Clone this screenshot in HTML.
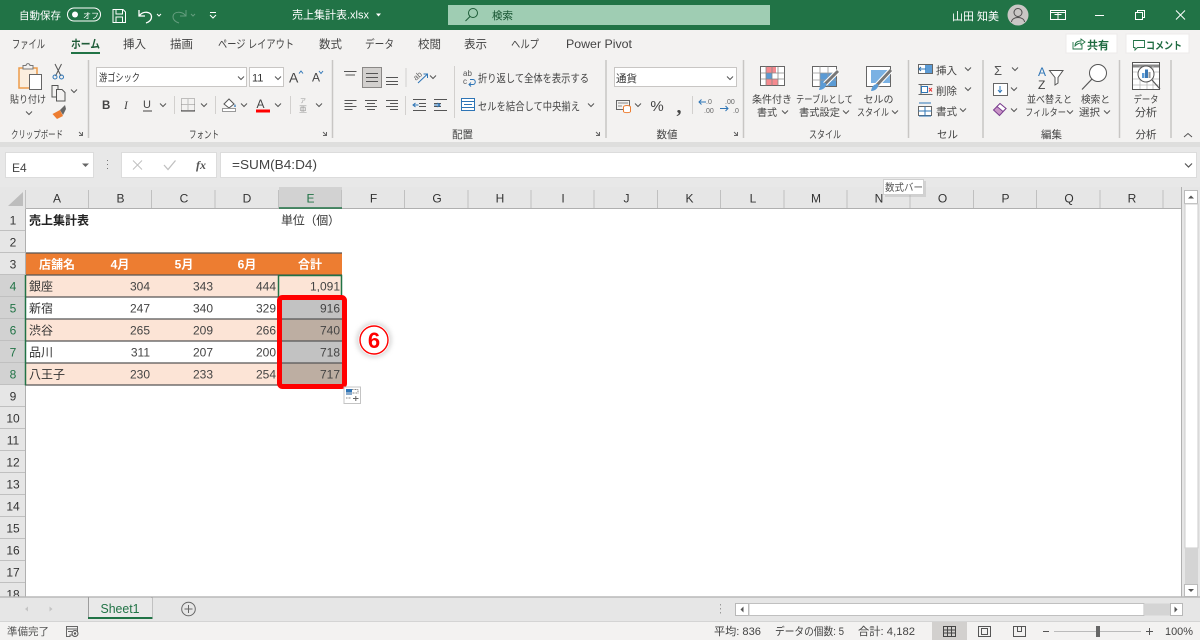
<!DOCTYPE html>
<html lang="ja">
<head>
<meta charset="utf-8">
<title>売上集計表.xlsx - Excel</title>
<style>
html,body{margin:0;padding:0;width:1200px;height:640px;overflow:hidden;background:#fff}
svg{display:block}
text{font-family:"Liberation Sans","Noto Sans CJK JP",sans-serif;fill:#444;font-size:10px}
.w text{fill:#fff}
.tab{font-size:11.5px;fill:#444}
.hd{font-size:12px;fill:#333;text-anchor:middle}
.rh{font-size:12px;fill:#333;text-anchor:middle}
.rs{font-size:12px;fill:#217346;text-anchor:middle}
.c{font-size:12px;fill:#333}
.r{font-size:12px;fill:#444;text-anchor:end}
.b{font-size:12px;fill:#fff;font-weight:bold;text-anchor:middle}
.m{text-anchor:middle}
.s{fill:none;stroke:#555;stroke-width:1}
.sep{stroke:#c8c6c4;stroke-width:1.5}
</style>
</head>
<body>
<svg width="1200" height="640" viewBox="0 0 1200 640" xmlns="http://www.w3.org/2000/svg">
<defs>
<path id="cv" d="M-3 -1.5L0 1.5L3 -1.5" fill="none" stroke="#555" stroke-width="1"/>
<path id="ln" d="M0 3.5H3.5V0M0 0L3 3" fill="none" stroke="#666" stroke-width="1"/>
<filter id="gl" x="-40%" y="-40%" width="180%" height="180%"><feGaussianBlur stdDeviation="2"/></filter>
</defs>

<!-- title bar -->
<rect width="1200" height="30" fill="#217346"/>
<g class="w">
<text x="19" y="19" style="font-size:10.5px">自動保存</text>
<rect x="67.5" y="8" width="33" height="13" rx="6.5" fill="none" stroke="#fff"/>
<circle cx="75" cy="14.5" r="3" fill="#fff"/>
<text x="83" y="18.5" style="font-size:8px">オフ</text>
<text x="292" y="18.5" style="font-size:11px">売上集計表.xlsx</text>
<text x="952" y="20" style="font-size:11px">山田 知美</text>
</g>
<g fill="none" stroke="#fff" stroke-width="1">
<path d="M113 9.5H123L125.5 12V22.5H113ZM116 9.5V14H122.5V9.5M116 22.5V17H122.5V22.5"/>
<path d="M139 10V16H145M139.5 15.5C143 11 151.5 11 151.5 17C151.5 20 149 22 146 23" stroke-width="1.3"/>
<path d="M157 14L159 16L161 14" stroke-width="1"/>
<g opacity=".3"><path d="M186 10V16H180M185.5 15.5C182 11 173 11 173 17C173 20 176 22 179 23"/><path d="M191 14L193 16L195 14"/></g>
<path d="M210 12.5H216M210 15L213 18L216 15"/>
<path d="M1054 10.5H1069V19.5H1054ZM1054 12.5H1069M1058 14.5H1065M1061.5 12.5V19.5" transform="translate(-3.5,0)"/>
<path d="M1095 15.5H1104"/>
<path d="M1135.5 12.5H1142.5V19.5H1135.5ZM1137.5 12.5V10.5H1144.5V17.5H1142.5"/>
<path d="M1176 10.5L1185 19.5M1185 10.5L1176 19.5"/>
<path d="M376 13.5h5l-2.500 3z" fill="#fff" stroke="none"/>
</g>
<rect x="448" y="5" width="322" height="20" fill="#9fcdb3"/>
<circle cx="473" cy="13" r="4.5" fill="none" stroke="#1d5c38" stroke-width="1"/>
<path d="M470 16.5L465.5 21" stroke="#1d5c38" stroke-width="1"/>
<text x="492" y="19" style="font-size:10.5px;fill:#14522f">検索</text>
<circle cx="1018" cy="15" r="10.5" fill="#c9c7c5"/>
<circle cx="1018" cy="12.5" r="4" fill="none" stroke="#4d4d4d"/>
<path d="M1011.5 22C1012 16 1024 16 1024.5 22" fill="none" stroke="#4d4d4d"/>

<!-- ribbon background -->
<rect y="30" width="1200" height="112" fill="#f3f2f1"/>
<rect y="142" width="1200" height="5" fill="#dededd"/>
<rect y="147" width="1200" height="40" fill="#e8e8e8"/>

<!-- tabs -->
<text class="tab" x="12" y="48" textLength="33" lengthAdjust="spacingAndGlyphs">ファイル</text>
<text class="tab" x="71" y="48" textLength="29" lengthAdjust="spacingAndGlyphs" style="font-weight:bold;fill:#1f5c39">ホーム</text>
<rect x="71" y="52" width="29" height="2" fill="#217346"/>
<text class="tab" x="123" y="48">挿入</text>
<text class="tab" x="170" y="48">描画</text>
<text class="tab" x="218" y="48" textLength="76" lengthAdjust="spacingAndGlyphs">ページ レイアウト</text>
<text class="tab" x="319" y="48">数式</text>
<text class="tab" x="365" y="48" textLength="29" lengthAdjust="spacingAndGlyphs">データ</text>
<text class="tab" x="418" y="48">校閲</text>
<text class="tab" x="464" y="48">表示</text>
<text class="tab" x="511" y="48" textLength="28" lengthAdjust="spacingAndGlyphs">ヘルプ</text>
<text class="tab" x="566" y="48" textLength="66" lengthAdjust="spacingAndGlyphs" style="font-size:12px">Power Pivot</text>
<rect x="1066" y="34" width="51" height="19" fill="#fff" stroke="#ecebea"/>
<path d="M1073 42V49H1082V45M1075 46C1075 42 1078 41 1081 41V39L1085 42L1081 45V43C1079 43 1077 44 1075 46Z" fill="none" stroke="#217346" stroke-width=".9"/>
<text x="1087" y="49" style="font-size:11px;font-weight:bold;fill:#1f6b41">共有</text>
<rect x="1126" y="34" width="63" height="19" fill="#fff" stroke="#ecebea"/>
<path d="M1133.5 40.5H1144.5V47.5H1137.5L1135 50V47.5H1133.5Z" fill="none" stroke="#217346" stroke-width=".9"/>
<text x="1146" y="49" textLength="36" lengthAdjust="spacingAndGlyphs" style="font-size:10.5px;font-weight:bold;fill:#1f6b41">コメント</text>

<!-- separators -->
<g class="sep">
<path d="M88.5 60V138M332.5 60V138M606 60V138M743.5 60V138M908.5 60V138M983 60V138M1119.5 60V138M1171 60V138"/>
</g>
<g stroke="#d2d0ce">
<path d="M174.5 96V114M215.5 96V114M290.5 96V114M406 68V87M405.5 96V115M454.5 66V118M692.5 96V114"/>
</g>

<!-- clipboard -->
<path d="M19 68H37V88H19Z" fill="#fbeede" stroke="#ed9b4a" stroke-width="1.5"/>
<path d="M23 68V65.5H26C26.5 63 29.5 63 30 65.5H33V69H23Z" fill="#f3f2f1" stroke="#777"/>
<rect x="29.5" y="74.5" width="12" height="15" fill="#fff" stroke="#666"/>
<path d="M55 64L61 76M61.5 64L55.5 76" fill="none" stroke="#555"/>
<circle cx="55" cy="77" r="2" fill="none" stroke="#2e75b6"/><circle cx="61.5" cy="77" r="2" fill="none" stroke="#2e75b6"/>
<path d="M52 85.5H58V97H52Z" fill="#f3f2f1" stroke="#555"/>
<path d="M56.5 89.5H62L65 92.5V101H56.5Z" fill="#f3f2f1" stroke="#555"/>
<use href="#cv" x="74" y="91"/>
<path d="M52.5 114L60 110L63 116L57 119Z" fill="#ed7d31"/>
<path d="M60 110L65 105L66 109L63 115" fill="#666"/>
<text x="10" y="103" textLength="36" lengthAdjust="spacingAndGlyphs">貼り付け</text>
<use href="#cv" x="29" y="113"/>
<text x="11" y="138" textLength="52" lengthAdjust="spacingAndGlyphs" style="font-size:10.5px">クリップボード</text>
<use href="#ln" x="79" y="132"/>

<!-- font -->
<rect x="96.5" y="67.5" width="150" height="19" fill="#fff" stroke="#c8c6c4"/>
<text x="99" y="81" textLength="41" lengthAdjust="spacingAndGlyphs" style="font-size:10.5px;fill:#333">游ゴシック</text>
<use href="#cv" x="241" y="78"/>
<rect x="249.5" y="67.5" width="34" height="19" fill="#fff" stroke="#c8c6c4"/>
<text x="252" y="81.5" style="font-size:11px;fill:#333">11</text>
<use href="#cv" x="278" y="78"/>
<text x="289" y="82.5" style="font-size:14px;fill:#444">A</text>
<path d="M299 73.5L301 71L303 73.5" fill="none" stroke="#2e75b6"/>
<text x="312" y="81.5" style="font-size:12px;fill:#444">A</text>
<path d="M319 71L321 73.5L323 71" fill="none" stroke="#2e75b6"/>
<text x="102" y="109" style="font-size:11.5px;font-weight:bold;fill:#444">B</text>
<text x="124" y="109" style="font-size:11.5px;font-style:italic;font-family:'Liberation Serif',serif;fill:#444">I</text>
<text x="143" y="108" style="font-size:11px;fill:#444">U</text>
<path d="M143 111H152" stroke="#444"/>
<use href="#cv" x="163" y="105"/>
<path d="M181.5 98.5H194.5V110.5H181.5ZM188 98.5V110.5M181.5 104.5H194.5" fill="none" stroke="#888" stroke-dasharray="1 1"/>
<path d="M181 111H195" stroke="#444"/>
<use href="#cv" x="204" y="105"/>
<path d="M224 104L229 99L234 104L229 108Z" fill="#fff" stroke="#555"/>
<path d="M235 104C236 106 236 107 235 107C234 107 234 106 235 104Z" fill="#2e75b6"/>
<rect x="222.5" y="108.5" width="13" height="3" fill="#fff" stroke="#999"/>
<use href="#cv" x="244" y="105"/>
<text x="256.5" y="108" style="font-size:12px;fill:#444">A</text>
<rect x="256" y="109.5" width="14" height="3" fill="#f00"/>
<use href="#cv" x="278" y="105"/>
<text class="m" x="303" y="103" style="font-size:6px;fill:#999">ア</text>
<text class="m" x="303" y="112" style="font-size:8px;fill:#999">亜</text>
<use href="#cv" x="319" y="105"/>
<text x="189" y="138" textLength="30" lengthAdjust="spacingAndGlyphs" style="font-size:10.5px">フォント</text>
<use href="#ln" x="323" y="132"/>

<!-- alignment -->
<g class="s">
<path d="M344 71.5H356.500M345.500 75H355" transform="translate(0,0)"/>
<rect x="362.5" y="67.500" width="19" height="20" fill="#d2d0ce" stroke="#8a8886"/>
<path d="M366 73.5H378M366 77.5H378M366 81.5H378"/>
<path d="M386 77.5H398M386 81.5H398M386 84.5H398"/>
<path d="M344.5 100.5H356.5M344.5 103.5H352.5M344.5 106.500H356.5M344.5 109.5H352.5"/>
<path d="M365 100.5H377M367 103.5H375M365 106.5H377M367 109.5H375"/>
<path d="M386 100.5H398M390 103.5H398M386 106.5H398M390 109.5H398"/>
<path d="M413 99.5H426M419 103.5H426M419 106.5H426M413 110.5H426"/>
<path d="M434 99.5H447M434 103.5H441M434 106.5H441M434 110.5H447" transform="translate(0,0)"/>
</g>
<path d="M413 105H418.500M415.500 103L413 105L415.500 107M434 105H440M437.500 103L440 105L437.500 107" fill="none" stroke="#2e75b6"/>
<text x="413" y="79" transform="rotate(-40 417 76)" style="font-size:8px;fill:#666">ab</text>
<path d="M418 83L427 74.500M423.500 74H427.500V78" fill="none" stroke="#2e75b6"/>
<use href="#cv" x="433" y="77"/>
<text x="463" y="76" style="font-size:8px;fill:#555">ab</text>
<text x="463" y="84" style="font-size:8px;fill:#555">c</text>
<path d="M470 79.5H473C476 79.5 476 84.5 473 84.5H469M471 82.5L469 84.5L471 86.5" fill="none" stroke="#2e75b6"/>
<text x="478" y="82" textLength="111" lengthAdjust="spacingAndGlyphs" style="font-size:11px">折り返して全体を表示する</text>
<rect x="461.5" y="98.5" width="13" height="12" fill="#fff" stroke="#2e75b6"/>
<path d="M461.5 101.5H474.5M461.5 107.5H474.5M464 104.5H472" fill="none" stroke="#2e75b6"/>
<text x="478" y="110" textLength="102" lengthAdjust="spacingAndGlyphs" style="font-size:11px">セルを結合して中央揃え</text>
<use href="#cv" x="591" y="105"/>
<text x="452" y="138" style="font-size:10.5px">配置</text>
<use href="#ln" x="596" y="132"/>

<!-- number -->
<rect x="614.5" y="67.5" width="122" height="19" fill="#fff" stroke="#c8c6c4"/>
<text x="616" y="82" style="font-size:10.5px;fill:#333">通貨</text>
<use href="#cv" x="730" y="78"/>
<rect x="616.5" y="100.5" width="13" height="9" fill="none" stroke="#666"/>
<path d="M618 103H628M618 106H622" stroke="#888"/>
<ellipse cx="627" cy="107" rx="3.5" ry="1.5" fill="#fff" stroke="#ed7d31"/>
<path d="M623.5 107V111.500C624 113 630 113 630.5 111.5V107" fill="#fff" stroke="#ed7d31"/>
<use href="#cv" x="638" y="105"/>
<text class="m" x="657" y="111" style="font-size:15px;fill:#444">%</text>
<text class="m" x="679" y="113" style="font-size:20px;font-weight:bold;fill:#444;font-family:'Liberation Serif',serif">,</text>
<text x="706" y="104" style="font-size:7px;fill:#666">.0</text>
<text x="704" y="113" style="font-size:7px;fill:#666">.00</text>
<path d="M699 102H706M701.5 99.5L699 102L701.5 104.5" fill="none" stroke="#2e75b6"/>
<text x="725" y="104" style="font-size:7px;fill:#666">.00</text>
<text x="733" y="113" style="font-size:7px;fill:#666">.0</text>
<path d="M720 108.5H728M725.5 106L728 108.5L725.5 111" fill="none" stroke="#2e75b6"/>
<text class="m" x="667" y="138" style="font-size:10.5px">数値</text>
<use href="#ln" x="734" y="132"/>

<!-- styles -->
<g>
<rect x="760.5" y="66.5" width="24" height="19" fill="#fff" stroke="#666"/>
<rect x="766" y="67" width="10" height="6" fill="#f58a8f"/>
<rect x="766" y="73" width="6" height="6" fill="#5b9bd5"/>
<rect x="766" y="79" width="12" height="6" fill="#f58a8f"/>
<path d="M760.5 73H784.5M760.5 79H784.5M766 66.5V85.5M772 66.5V85.5M778 66.5V85.5" stroke="#888" fill="none" stroke-width=".8"/>
<rect x="812.5" y="66.5" width="24" height="20" fill="#fff" stroke="#666"/>
<rect x="820" y="73" width="16" height="13" fill="#5b9bd5"/>
<path d="M812.5 73H836.5M812.5 80H836.5M820 66.5V86.5M828 66.5V86.5" stroke="#999" fill="none" stroke-width=".8"/>
<path d="M825 84L838 71" stroke="#fff" stroke-width="5"/>
<path d="M825 84L838 71" stroke="#777" stroke-width="3"/>
<path d="M819 90C820 85 822 83 826 83C827 87 823 90 819 90Z" fill="#5b9bd5"/>
<rect x="866.5" y="66.5" width="24" height="20" fill="#fff" stroke="#666"/>
<rect x="871" y="70" width="19" height="13" fill="#7ab1e3"/>
<path d="M877 85L891 70" stroke="#fff" stroke-width="5"/>
<path d="M877 85L891 70" stroke="#777" stroke-width="3"/>
<path d="M871 91C872 86 874 84 878 84C879 88 875 91 871 91Z" fill="#5b9bd5"/>
</g>
<text class="m" x="772" y="103">条件付き</text>
<text x="757" y="116">書式</text><use href="#cv" x="785" y="112"/>
<text class="m" x="824.5" y="103" textLength="57" lengthAdjust="spacingAndGlyphs">テーブルとして</text>
<text x="799" y="116" textLength="41" lengthAdjust="spacingAndGlyphs">書式設定</text><use href="#cv" x="846" y="112"/>
<text class="m" x="878.500" y="103">セルの</text>
<text x="857" y="116" textLength="32" lengthAdjust="spacingAndGlyphs">スタイル</text><use href="#cv" x="895" y="112"/>
<text x="809" y="138" textLength="32" lengthAdjust="spacingAndGlyphs" style="font-size:10.5px">スタイル</text>

<!-- cells -->
<rect x="918.5" y="64.5" width="14" height="9" fill="#fff" stroke="#666"/>
<rect x="925" y="65" width="7" height="8" fill="#5b9bd5"/>
<path d="M919 69H926M921 67L919 69L921 71" fill="none" stroke="#2e75b6"/>
<text x="936" y="74" style="font-size:10.5px">挿入</text><use href="#cv" x="968" y="69"/>
<path d="M918.5 84.5H932.5M918.5 94.5H932.5M921 84.5V94.5" fill="none" stroke="#666"/>
<rect x="921.5" y="86.5" width="6" height="6" fill="#fff" stroke="#2e75b6"/>
<path d="M929 88L932 91.5M932 88L929 91.5" stroke="#e33"/>
<text x="936" y="94.5" style="font-size:10.5px">削除</text><use href="#cv" x="968" y="89"/>
<rect x="918.5" y="106.5" width="13" height="9" fill="#fff" stroke="#666"/>
<path d="M919 103H931M919 116H931M925 106.5V115.5M918.5 111H931.5" stroke="#2e75b6" fill="none"/>
<text x="936" y="115" style="font-size:10.5px">書式</text><use href="#cv" x="963" y="110"/>
<text x="937" y="138" style="font-size:10.5px">セル</text>

<!-- editing -->
<text x="994" y="75" style="font-size:13px;fill:#555">Σ</text><use href="#cv" x="1015" y="69"/>
<rect x="993.5" y="83.5" width="14" height="12" fill="#fff" stroke="#666"/>
<path d="M1000 86V92M998 90L1000 92.5L1002 90" fill="none" stroke="#2e75b6"/><use href="#cv" x="1014" y="89"/>
<path d="M993.5 110L1000 103.5L1006 108.5L999.5 115.5Z" fill="#c994c7" stroke="#7b3f8f"/>
<path d="M1000 103.5L1006 108.5L1003 111.5L997 106.5Z" fill="#fff" stroke="#7b3f8f"/>
<use href="#cv" x="1014" y="110"/>
<text x="1038" y="76" style="font-size:12px;fill:#2e75b6">A</text>
<text x="1038" y="89" style="font-size:12px;fill:#444">Z</text>
<path d="M1049.5 70.5H1063L1058 77.5V83L1055 85V77.5Z" fill="#fff" stroke="#555"/>
<circle cx="1098" cy="73" r="8.5" fill="#fff" stroke="#555"/>
<path d="M1092 79L1082 89.5" stroke="#555" stroke-width="1.2"/>
<text x="1027" y="103" textLength="45" lengthAdjust="spacingAndGlyphs">並べ替えと</text>
<text x="1025" y="116" textLength="41" lengthAdjust="spacingAndGlyphs">フィルター</text><use href="#cv" x="1070" y="112"/>
<text x="1081" y="103" textLength="29" lengthAdjust="spacingAndGlyphs">検索と</text>
<text x="1079" y="116" textLength="21" lengthAdjust="spacingAndGlyphs">選択</text><use href="#cv" x="1107" y="112"/>
<text x="1041" y="138" style="font-size:10.5px">編集</text>

<!-- analysis -->
<rect x="1132.5" y="62.5" width="27" height="27" fill="#fff" stroke="#555"/>
<path d="M1133 66H1159" stroke="#888" stroke-width="3"/>
<path d="M1133 72H1159M1133 79H1159M1133 85H1159M1140 66V89M1147 66V89M1153 66V89" stroke="#bbb" stroke-width=".8"/>
<circle cx="1146" cy="74" r="8" fill="#fff" stroke="#555"/>
<rect x="1142" y="73" width="2.5" height="5" fill="#5b9bd5"/><rect x="1145" y="69.5" width="3" height="8.5" fill="#3a78b5"/><rect x="1148.5" y="72" width="2" height="6" fill="#999"/>
<path d="M1152 80L1160 89" stroke="#555" stroke-width="1.2"/>
<text class="m" x="1146" y="103" textLength="25" lengthAdjust="spacingAndGlyphs">データ</text>
<text class="m" x="1146" y="116" style="font-size:11px">分析</text>
<text class="m" x="1146" y="138" style="font-size:10.5px">分析</text>
<path d="M1184 137L1188 133.5L1192 137" fill="none" stroke="#555"/>

<!-- formula bar -->
<rect x="5.5" y="152.5" width="88" height="25" fill="#fff" stroke="#dcdcdc"/>
<text x="12" y="172" style="font-size:12px;fill:#444">E4</text>
<path d="M82 163.5h7l-3.500 3.500z" fill="#666"/>
<path d="M107.5 160v1M107.5 164v1M107.5 168v1" stroke="#777"/>
<rect x="121.5" y="152.5" width="95" height="25" fill="#fff" stroke="#dcdcdc"/>
<path d="M133 160.5L142 169.5M142 160.5L133 169.5" stroke="#c0c0c0" stroke-width="1"/>
<path d="M164 165L168 169.5L175.5 160.5" fill="none" stroke="#c0c0c0" stroke-width="1.3"/>
<text x="196" y="169" style="font-size:12px;font-style:italic;font-weight:bold;font-family:'Liberation Serif',serif;fill:#555">fx</text>
<rect x="220.5" y="152.5" width="976" height="25" fill="#fff" stroke="#dcdcdc"/>
<text x="232" y="169" textLength="85" lengthAdjust="spacingAndGlyphs" style="font-size:13px;fill:#444">=SUM(B4:D4)</text>
<path d="M1185 163.5L1188.5 167L1192 163.5" fill="none" stroke="#555" stroke-width="1.2"/>

<!-- grid -->
<rect x="26" y="209" width="1156" height="388" fill="#fff"/>
<rect y="187" width="26" height="410" fill="#e6e6e6"/>
<rect x="26" y="187" width="1138" height="22" fill="#e6e6e6"/>
<rect x="1164" y="187" width="36" height="22" fill="#e6e6e6"/>
<rect x="1182" y="187" width="18" height="410" fill="#e6e6e6"/>
<path d="M23 192V206H8Z" fill="#bdbdbd"/>
<rect x="279" y="187" width="63" height="21" fill="#d2d2d2"/>
<rect x="0" y="275" width="25" height="110" fill="#d2d2d2"/>
<g stroke="#c0c0c0" stroke-width="1">
<path d="M25.5 190V209M88.5 190V209M151.5 190V209M215 190V209M278.5 190V209M341.5 190V209M404.5 190V209M468 190V209M531 190V209M594 190V209M657.5 190V209M720.5 190V209M784 190V209M847 190V209M910 190V209M973.5 190V209M1036.5 190V209M1100 190V209M1163 190V209"/>
<path d="M0 230.5H25M0 252.5H25M0 274.5H25M0 296.5H25M0 318.5H25M0 340.5H25M0 362.5H25M0 384.5H25M0 406.5H25M0 428.5H25M0 450.5H25M0 472.5H25M0 494.5H25M0 516.5H25M0 538.5H25M0 560.5H25M0 582.5H25"/>
</g>
<path d="M26 208.5H1182M25.5 209V597M1181.5 187V597" stroke="#b0b0b0"/>
<path d="M279 208H342" stroke="#217346" stroke-width="1.5"/>
<text class="hd" x="57" y="202.5">A</text><text class="hd" x="120.5" y="202.5">B</text><text class="hd" x="184" y="202.5">C</text><text class="hd" x="247" y="202.5">D</text><text class="hd" x="310.5" y="202.5" style="fill:#217346">E</text><text class="hd" x="373.5" y="202.5">F</text><text class="hd" x="437" y="202.5">G</text><text class="hd" x="500" y="202.5">H</text><text class="hd" x="563" y="202.5">I</text><text class="hd" x="626.5" y="202.5">J</text><text class="hd" x="689.5" y="202.5">K</text><text class="hd" x="753" y="202.5">L</text><text class="hd" x="816" y="202.5">M</text><text class="hd" x="879" y="202.5">N</text><text class="hd" x="942.5" y="202.5">O</text><text class="hd" x="1005.5" y="202.5">P</text><text class="hd" x="1069" y="202.5">Q</text><text class="hd" x="1132" y="202.5">R</text>
<text class="rh" x="13" y="224.5">1</text><text class="rh" x="13" y="246.5">2</text><text class="rh" x="13" y="268.5">3</text><text class="rs" x="13" y="290.5">4</text><text class="rs" x="13" y="312.5">5</text><text class="rs" x="13" y="334.5">6</text><text class="rs" x="13" y="356.5">7</text><text class="rs" x="13" y="378.5">8</text><text class="rh" x="13" y="400.5">9</text><text class="rh" x="13" y="422.5">10</text><text class="rh" x="13" y="444.5">11</text><text class="rh" x="13" y="466.5">12</text><text class="rh" x="13" y="488.5">13</text><text class="rh" x="13" y="510.5">14</text><text class="rh" x="13" y="532.5">15</text><text class="rh" x="13" y="554.5">16</text><text class="rh" x="13" y="576.5">17</text><text class="rh" x="13" y="598.5">18</text>

<!-- sheet contents -->
<text x="29" y="224.5" style="font-size:12px;font-weight:bold;fill:#222">売上集計表</text>
<text x="281" y="224.5" textLength="59" style="font-size:12px;fill:#333">単位（個）</text>
<rect x="26" y="253" width="316" height="22" fill="#ed7d31"/>
<rect x="26" y="275" width="316" height="22" fill="#fce4d6"/>
<rect x="26" y="319" width="253" height="22" fill="#fce4d6"/>
<rect x="26" y="363" width="253" height="22" fill="#fce4d6"/>
<rect x="279" y="297" width="63" height="22" fill="#c2c2c2"/>
<rect x="279" y="319" width="63" height="22" fill="#bdaea2"/>
<rect x="279" y="341" width="63" height="22" fill="#c2c2c2"/>
<rect x="279" y="363" width="63" height="22" fill="#bdaea2"/>
<path d="M26 253H342M26 275H342M26 297H342M26 319H342M26 341H342M26 363H342M26 385H342" stroke="#555" stroke-width="1.3"/>
<text class="b" x="57" y="268.5">店舗名</text><text class="b" x="120" y="268.5">4月</text><text class="b" x="184" y="268.5">5月</text><text class="b" x="247" y="268.5">6月</text><text class="b" x="310" y="268.5">合計</text>
<text class="c" x="29" y="290.5">銀座</text><text class="r" x="150" y="290.5">304</text><text class="r" x="213" y="290.5">343</text><text class="r" x="276" y="290.5">444</text><text class="r" x="340" y="290.5">1,091</text>
<text class="c" x="29" y="312.5">新宿</text><text class="r" x="150" y="312.5">247</text><text class="r" x="213" y="312.5">340</text><text class="r" x="276" y="312.5">329</text><text class="r" x="340" y="312.5">916</text>
<text class="c" x="29" y="334.5">渋谷</text><text class="r" x="150" y="334.5">265</text><text class="r" x="213" y="334.5">209</text><text class="r" x="276" y="334.5">266</text><text class="r" x="340" y="334.5">740</text>
<text class="c" x="29" y="356.5">品川</text><text class="r" x="150" y="356.5">311</text><text class="r" x="213" y="356.5">207</text><text class="r" x="276" y="356.5">200</text><text class="r" x="340" y="356.5">718</text>
<text class="c" x="29" y="378.5">八王子</text><text class="r" x="150" y="378.5">230</text><text class="r" x="213" y="378.5">233</text><text class="r" x="276" y="378.5">254</text><text class="r" x="340" y="378.5">717</text>
<path d="M25.5 275V385.5" stroke="#217346" stroke-width="1.5"/>
<rect x="278.5" y="275.5" width="63" height="21.5" fill="none" stroke="#217346" stroke-width="1.5"/>
<rect x="279.5" y="297.5" width="65" height="89" rx="3" fill="none" stroke="#f00" stroke-width="5"/>

<!-- circled 6 -->
<circle cx="374" cy="340" r="18" fill="#cfcfcf" filter="url(#gl)" opacity=".7"/>
<circle cx="374" cy="340" r="15.5" fill="#fff"/>
<circle cx="374" cy="340" r="14" fill="#fff" stroke="#f00" stroke-width="1.4"/>
<text x="374" y="348" text-anchor="middle" style="font-size:22px;font-weight:bold;fill:#f00">6</text>

<!-- paste options -->
<rect x="344" y="387" width="16.5" height="16.5" fill="#fff" stroke="#c4c4c4"/>
<rect x="346" y="389" width="6" height="3" fill="#2e75b6"/><rect x="346" y="392" width="6" height="3" fill="#88aacc"/>
<path d="M352 389.5H358V393H352M346 398H351" stroke="#888" fill="none" stroke-dasharray="1 .5"/>
<path d="M353 398.5H358.5M355.8 396V401" stroke="#666"/>

<!-- tooltip -->
<rect x="885" y="181" width="41" height="16" fill="#aaa" opacity=".35"/>
<rect x="883.5" y="179.5" width="40" height="15" fill="#fff" stroke="#d0d0d0"/>
<text x="885" y="191" textLength="38" lengthAdjust="spacingAndGlyphs" style="font-size:10px;fill:#555">数式バー</text>

<!-- vertical scrollbar -->
<rect x="1184.5" y="190.5" width="13" height="13" fill="#fff" stroke="#bbb"/>
<path d="M1188 198.5h6l-3-3z" fill="#555"/>
<rect x="1185" y="204" width="13" height="344" fill="#fff" stroke="#ccc"/>
<rect x="1185" y="548" width="13" height="36" fill="#d4d4d4"/>
<rect x="1184.5" y="584.5" width="13" height="12" fill="#fff" stroke="#bbb"/>
<path d="M1188 589h6l-3 3z" fill="#555"/>

<!-- sheet tabs -->
<rect y="597" width="1200" height="24" fill="#e6e6e6"/>
<path d="M0 597H1200" stroke="#b8b8b8" stroke-width="1.5"/>
<path d="M0 621.5H1200" stroke="#d4d4d4"/>
<path d="M28 606.5v5l-3-2.500zM49.5 606.5v5l3-2.500z" fill="#c4c4c4"/>
<path d="M88.5 597V617M152 597V617" stroke="#9c9c9c"/>
<rect x="89" y="598" width="63" height="19" fill="#e9e9e9"/>
<rect x="88" y="617" width="64.5" height="2" fill="#217346"/>
<text x="100.5" y="613" textLength="39" lengthAdjust="spacingAndGlyphs" style="font-size:12.5px;fill:#217346">Sheet1</text>
<circle cx="188.5" cy="609" r="6.8" fill="none" stroke="#666"/>
<path d="M184.5 609H192.5M188.5 605V613" stroke="#666"/>
<path d="M720.5 604v1.500M720.5 608v1.500M720.5 612v1.500" stroke="#999"/>
<rect x="735.5" y="603.5" width="13" height="12" fill="#fff" stroke="#b8b8b8"/>
<path d="M743.5 606.5v6l-3-3z" fill="#555"/>
<rect x="749" y="603.5" width="395" height="12" fill="#fff" stroke="#c0c0c0"/>
<rect x="1145" y="603.5" width="25" height="12" fill="#d4d4d4"/>
<rect x="1170.5" y="603.5" width="12" height="12" fill="#fff" stroke="#b8b8b8"/>
<path d="M1174.5 606.5v6l3-3z" fill="#555"/>

<!-- status bar -->
<rect y="622" width="1200" height="18" fill="#f3f2f1"/>
<text x="7" y="635" textLength="42" lengthAdjust="spacingAndGlyphs" style="font-size:10.5px;fill:#555">準備完了</text>
<path d="M66.5 626.5H77.5V635H70V636.5H66.5ZM66.5 629H77.5M68 631.5H72" fill="none" stroke="#666"/>
<circle cx="75" cy="633.5" r="3" fill="#f3f2f1" stroke="#555"/><circle cx="75" cy="633.5" r="1.2" fill="#555"/>
<text x="714" y="635" textLength="47" lengthAdjust="spacingAndGlyphs" style="font-size:11px;fill:#444">平均: 836</text>
<text x="775" y="635" textLength="69" lengthAdjust="spacingAndGlyphs" style="font-size:11px;fill:#444">データの個数: 5</text>
<text x="858" y="635" textLength="57" lengthAdjust="spacingAndGlyphs" style="font-size:11px;fill:#444">合計: 4,182</text>
<rect x="932" y="622" width="35" height="18" fill="#d2d0ce"/>
<path d="M943.5 626.5H955.5V636.5H943.5ZM943.5 630H955.5M943.5 633H955.5M947.5 626.5V636.5M951.5 626.5V636.5" fill="none" stroke="#444"/>
<path d="M978.5 626.5H990.5V636.5H978.5ZM981.5 628.5H987.5V634.5H981.5Z" fill="none" stroke="#555"/>
<path d="M1013.5 626.5H1025.5V636.5H1013.5ZM1017.5 626.5V631.5H1021.5V626.5" fill="none" stroke="#555"/>
<path d="M1043 631.5H1049" stroke="#555"/>
<path d="M1054 631.5H1141" stroke="#bbb"/>
<rect x="1096" y="626" width="4" height="11" fill="#666"/>
<path d="M1146 631.5H1153M1149.5 628V635" stroke="#555"/>
<text x="1165" y="635" textLength="28" lengthAdjust="spacingAndGlyphs" style="font-size:11px;fill:#444">100%</text>
</svg>
</body>
</html>
